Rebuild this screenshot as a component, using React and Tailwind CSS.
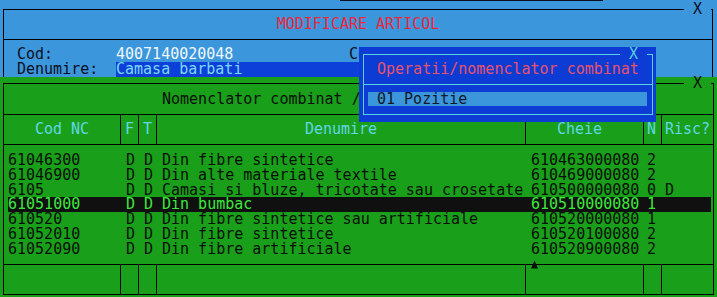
import React from "react";

const rows = [
  ["61046300", "D", "D", "Din fibre sintetice", "610463000080", "2", ""],
  ["61046900", "D", "D", "Din alte materiale textile", "610469000080", "2", ""],
  ["6105", "D", "D", "Camasi si bluze, tricotate sau crosetate", "610500000080", "0", "D"],
  ["61051000", "D", "D", "Din bumbac", "610510000080", "1", ""],
  ["610520", "D", "D", "Din fibre sintetice sau artificiale", "610520000080", "1", ""],
  ["61052010", "D", "D", "Din fibre sintetice", "610520100080", "2", ""],
  ["61052090", "D", "D", "Din fibre artificiale", "610520900080", "2", ""],
];

export default function App() {
  return (
    <div className="relative w-[717px] h-[297px] overflow-hidden bg-[#3c96dc] font-['DejaVu_Sans_Mono',monospace] text-[15px] whitespace-pre">
      {/* Blue window: MODIFICARE ARTICOL */}
      <div className="h-[77px] overflow-hidden">
        <div className="flex h-px">
          <div className="w-[340px]" />
          <div className="w-[263px] bg-[#0a1020]" />
        </div>
        <div className="pt-[8px]">
          <div className="ml-[3px] w-[710px] h-[200px] border-l border-r border-black">
            <div className="flex h-px items-center">
              <div className="h-px flex-1 bg-black" />
              <div className="w-[27px] text-center leading-[15px] text-[#0a1020]">X</div>
              <div className="h-px w-[1px] bg-black" />
            </div>
            <div className="h-[29px] leading-[29px] text-center text-[#e8283c]">MODIFICARE ARTICOL</div>
            <div className="h-px bg-black" />
            <div className="pt-[7px]">
              <div className="flex h-[15px] leading-[15px]">
                <div className="pl-[13px] w-[112px] text-[#0a1020]">Cod:</div>
                <div className="w-[233px] text-[#eef6ff]">4007140020048</div>
                <div className="text-[#0a1020]">Cod NC:</div>
              </div>
              <div className="flex h-[15px] leading-[15px]">
                <div className="pl-[13px] w-[112px] text-[#0a1020]">Denumire:</div>
                <div className="w-[480px] bg-[#0c40d8] text-[#7cd8f8]">Camasa barbati</div>
              </div>
            </div>
          </div>
        </div>
      </div>

      {/* Green window: Nomenclator combinat */}
      <div className="h-[220px] pt-[6px] bg-[#1a9f1a] text-[#061006]">
        <div className="ml-[3px] w-[711px] border-l border-r border-black">
          <div className="flex h-px items-center">
            <div className="h-px flex-1 bg-black" />
            <div className="w-[27px] text-center leading-[15px]">X</div>
            <div className="h-px w-[2px] bg-black" />
          </div>
          <div className="h-[30px] leading-[30px] pl-[158px]">Nomenclator combinat / articol 4007140020048</div>
          <div className="h-px bg-black" />
          {/* header */}
          <div className="flex h-[29px] leading-[29px] text-[#62d6e6]">
            <div className="w-[117px] border-r border-black text-center">Cod NC</div>
            <div className="w-[18px] border-r border-black text-center">F</div>
            <div className="w-[18px] border-r border-black text-center">T</div>
            <div className="w-[369px] border-r border-black text-center">Denumire</div>
            <div className="w-[118px] border-r border-black pl-[31px]">Cheie</div>
            <div className="w-[18px] border-r border-black pl-[3px]">N</div>
            <div className="flex-1 pl-[3px]">Risc?</div>
          </div>
          <div className="h-px bg-black" />
          {/* body */}
          <div className="h-[119px] pt-[8px]">
            {rows.map((r, i) => {
              const sel = i === 3;
              return (
                <div
                  key={i}
                  className={`ml-[4px] mr-[2px] flex h-[14.8px] leading-[14.8px] ${sel ? "bg-[#101010] text-[#3ce83c]" : ""}`}
                >
                  <div className="w-[118px]">{r[0]}</div>
                  <div className="w-[18px]">{r[1]}</div>
                  <div className="w-[18px]">{r[2]}</div>
                  <div className="w-[369px]">{r[3]}</div>
                  <div className="w-[116px]">{r[4]}</div>
                  <div className="w-[18px]">{r[5]}</div>
                  <div className="flex-1">{r[6]}</div>
                </div>
              );
            })}
          </div>
          <div className="h-px bg-black" />
          {/* footer */}
          <div className="flex h-[29px]">
            <div className="w-[117px] border-r border-black" />
            <div className="w-[18px] border-r border-black" />
            <div className="w-[18px] border-r border-black" />
            <div className="w-[369px] border-r border-black" />
            <div className="w-[118px] border-r border-black" />
            <div className="w-[18px] border-r border-black" />
            <div className="flex-1" />
          </div>
          <div className="h-px bg-black" />
        </div>
      </div>

      {/* scroll marker */}
      <svg className="absolute left-[530px] top-[260px]" width="9" height="9" viewBox="0 0 9 9">
        <polygon points="4.5,0.5 8,8.5 1,8.5" fill="#061006" />
      </svg>

      {/* Popup: Operatii/nomenclator combinat */}
      <div className="absolute left-[359px] top-[47px] w-[297px] h-[75px] bg-[#0c3cd4] pt-[7px] pl-[4px]">
        <div className="w-[290px] h-[61px] border-l border-r border-b border-[#5ad0e0]">
          <div className="flex h-px items-center">
            <div className="h-px flex-1 bg-[#5ad0e0]" />
            <div className="w-[27px] text-center leading-[15px] text-[#5ad0e0]">X</div>
            <div className="h-px w-[5px] bg-[#5ad0e0]" />
          </div>
          <div className="h-[29px] leading-[29px] pl-[13px] text-[#e8506c]">Operatii/nomenclator combinat</div>
          <div className="h-px bg-[#5ad0e0]" />
          <div className="pt-[7px]">
            <div className="ml-[4px] w-[279px] h-[14px] leading-[14px] bg-[#3c96dc] pl-[9px] text-[#101828]">01 Pozitie</div>
          </div>
        </div>
      </div>
    </div>
  );
}
